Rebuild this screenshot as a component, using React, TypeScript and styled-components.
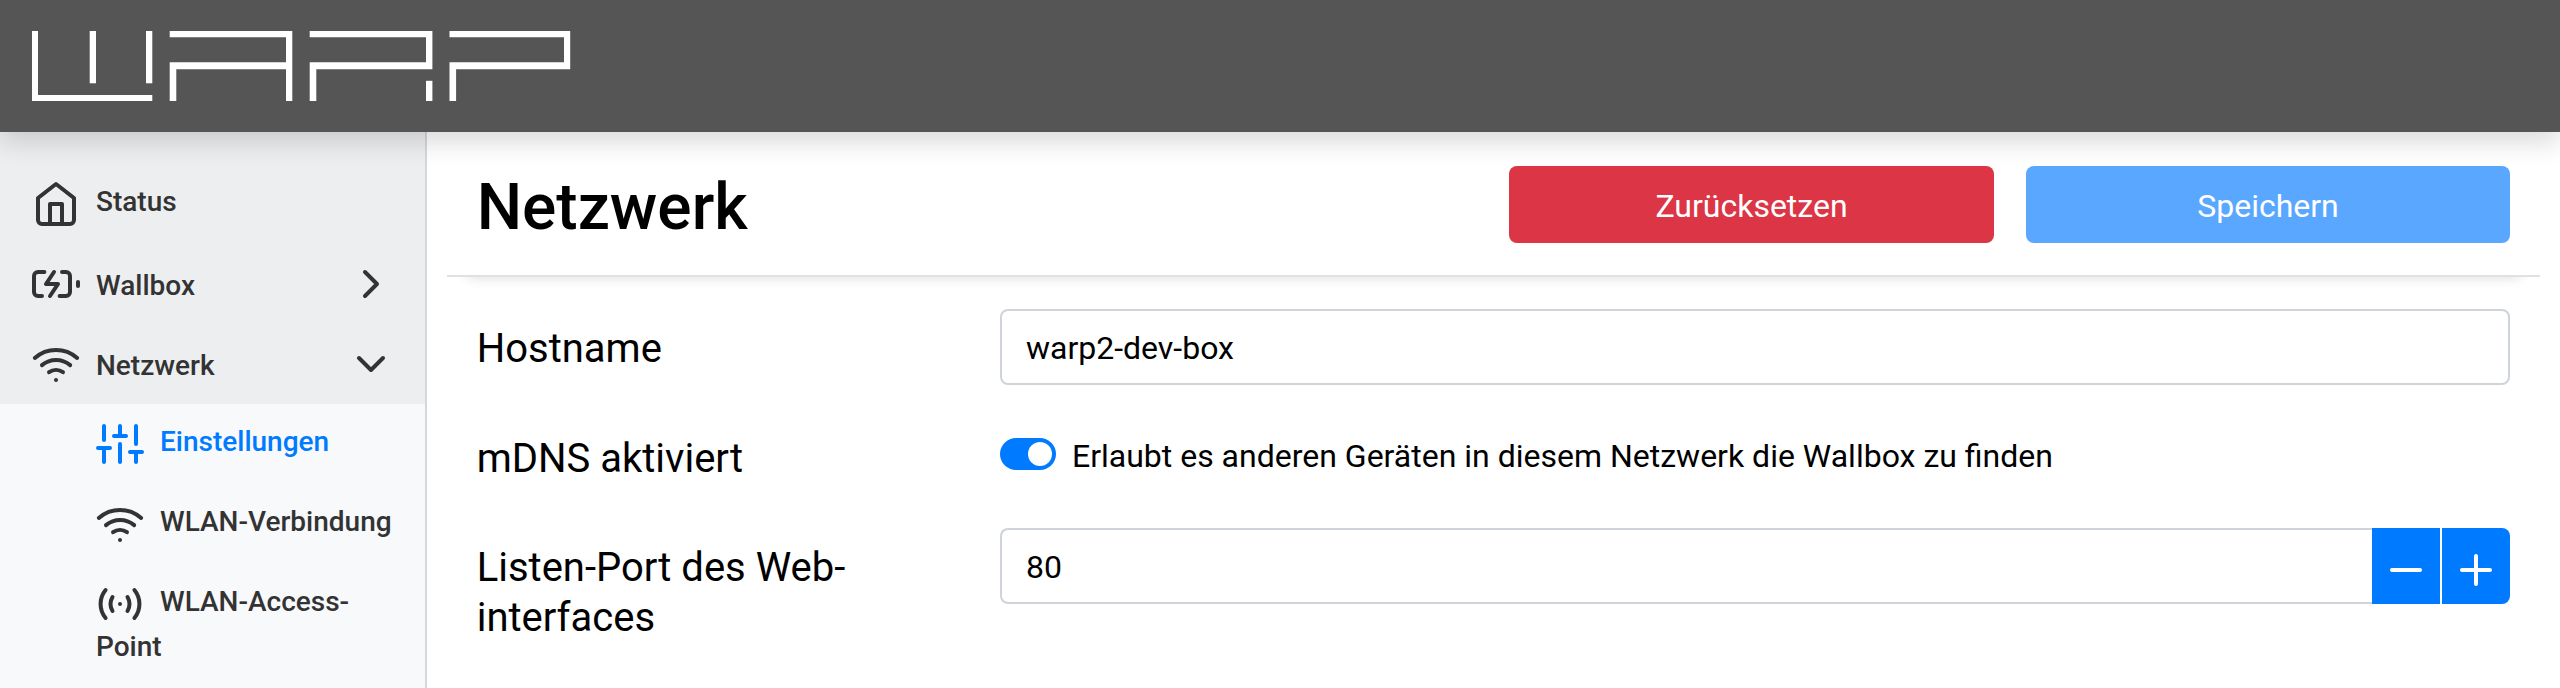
import React from "react";
import styled, { createGlobalStyle, css } from "styled-components";

const GlobalStyle = createGlobalStyle`
  *, *::before, *::after { box-sizing: border-box; }
  body {
    margin: 0;
    background: #fff;
    color: #000;
    font-family: Roboto, "Liberation Sans", sans-serif;
    font-size: 32px;
    line-height: 1.5;
    overflow: hidden;
  }
`;

const Page = styled.div`
  display: flex;
  flex-direction: column;
  height: 688px;
  overflow: hidden;
`;

const TopBar = styled.header`
  position: relative;
  z-index: 2;
  flex: none;
  display: flex;
  height: 132px;
  padding: 31px 32px;
  background: #555;
  box-shadow: 0 10px 24px rgba(0, 0, 0, 0.15);
`;

const Body = styled.div`
  flex: 1;
  min-height: 0;
  display: flex;
`;

const Sidebar = styled.nav`
  flex: none;
  width: 426.67px;
  padding-top: 32px;
  background: #edeef0;
  border-right: 2px solid #d5d7d9;
`;

const rowText = css`
  color: #333;
  font-size: 28px;
  font-weight: 500;
  text-decoration: none;
`;

const NavLink = styled.a<{ $active?: boolean }>`
  ${rowText}
  display: block;
  padding: 16px 28px 16px 32px;
  line-height: 37.5px;
  ${(p) => p.$active && "color: #007bff;"}
`;

const NavToggle = styled.a`
  ${rowText}
  display: flex;
  align-items: center;
  gap: 16px;
  height: 80px;
  padding: 0 30px 0 32px;
`;

const ToggleLabel = styled.span`
  flex: 1;
  padding-top: 4px;
`;

const SubMenu = styled.div`
  height: 400px;
  padding-left: 64px;
  background: #f8f9fb;
`;

const Svg = styled.svg<{ $inline?: boolean }>`
  flex: none;
  width: 48px;
  height: 48px;
  fill: none;
  stroke: currentColor;
  stroke-width: 2;
  stroke-linecap: round;
  stroke-linejoin: round;
  ${(p) => p.$inline && "vertical-align: middle; margin-right: 16px;"}
`;

const icons = {
  home: (
    <>
      <path d="M3 9l9-7 9 7v11a2 2 0 0 1-2 2H5a2 2 0 0 1-2-2z" />
      <polyline points="9 22 9 12 15 12 15 22" />
    </>
  ),
  battery: (
    <>
      <path d="M5 18H3a2 2 0 0 1-2-2V8a2 2 0 0 1 2-2h3.19M15 6h2a2 2 0 0 1 2 2v8a2 2 0 0 1-2 2h-3.19" />
      <line x1="23" y1="13" x2="23" y2="11" />
      <polyline points="11 6 7 12 13 12 9 18" />
    </>
  ),
  wifi: (
    <>
      <path d="M5 12.55a11 11 0 0 1 14.08 0" />
      <path d="M1.42 9a16 16 0 0 1 21.16 0" />
      <path d="M8.53 16.11a6 6 0 0 1 6.95 0" />
      <line x1="12" y1="20" x2="12.01" y2="20" />
    </>
  ),
  sliders: (
    <>
      <path d="M4 21v-7M4 10V3M12 21v-9M12 8V3M20 21v-5M20 12V3" />
      <path d="M1 14h6M9 8h6M17 16h6" />
    </>
  ),
  accessPoint: (
    <>
      <path d="M4.8 19a11 11 0 0 1 0-14" />
      <path d="M19.2 5a11 11 0 0 1 0 14" />
      <path d="M8.25 15.5a7 7 0 0 1 0-7" />
      <path d="M15.75 8.5a7 7 0 0 1 0 7" />
      <line x1="12" y1="12" x2="12.01" y2="12" />
    </>
  ),
  chevronRight: <polyline points="9 18 15 12 9 6" />,
  chevronDown: <polyline points="6 9 12 15 18 9" />,
  minus: <path d="M5 12h14" />,
  plus: <path d="M5 12h14M12 5v14" />,
};

const Icon = ({ name, inline }: { name: keyof typeof icons; inline?: boolean }) => (
  <Svg viewBox="0 0 24 24" $inline={inline} aria-hidden="true">
    {icons[name]}
  </Svg>
);

const LogoSvg = styled.svg`
  flex: none;
  width: 539px;
  height: 70px;
  fill: #fff;
`;

/* WARP wordmark built from straight bars */
const Logo = () => (
  <LogoSvg viewBox="0 0 539 70" role="img" aria-label="WARP">
    <path d="M0 0h6v64h114.3v6H0z" />
    <path d="M57.7 0h6.3v52.3h-6.3z" />
    <path d="M114 0h6.3v52.3H114z" />
    <path d="M137.7 0h122.6v70H254V38.3h-109.7V70h-6.6V31.3H254V6.3H137.7z" />
    <path d="M277.7 0h122.7v38.3H284.3V70h-6.6V31.3H394V6.3H277.7z" />
    <path d="M394 49.8h6.4V70H394z" />
    <path d="M417.5 0h120.7v38.3H424.1V70h-6.6V31.3H532V6.3H417.5z" />
  </LogoSvg>
);

const Main = styled.main`
  flex: 1;
  display: flex;
  flex-direction: column;
  padding: 0 20px;
`;

const PageHeading = styled.div`
  flex: none;
  display: flex;
  align-items: center;
  justify-content: space-between;
  height: 145px;
  padding: 0 30px;
  border-bottom: 2px solid #dee2e6;
  box-shadow: 0 20px 12px -20px rgba(0, 0, 0, 0.15);
`;

const Title = styled.h1`
  margin: 0;
  padding-top: 8px;
  font-size: 64px;
  font-weight: 500;
  line-height: 76px;
`;

const Actions = styled.div`
  display: flex;
  gap: 32px;
  padding-top: 2px;
`;

const Button = styled.button<{ $danger?: boolean }>`
  width: ${(p) => (p.$danger ? 485 : 484)}px;
  height: 77px;
  padding: 3px 0 0;
  border: 0;
  border-radius: 8px;
  background: ${(p) => (p.$danger ? "#dc3545" : "#59a7ff")};
  color: #fff;
  font: inherit;
`;

const Form = styled.form`
  display: flex;
  flex-direction: column;
  gap: 32px;
  padding: 32px 30px 0;
`;

const Row = styled.div<{ $height?: number }>`
  display: flex;
  height: ${(p) => p.$height ?? 76}px;
`;

const Label = styled.label<{ $top?: number }>`
  flex: none;
  width: 523.3px;
  padding: ${(p) => p.$top ?? 15}px 100px 0 0;
  font-size: 40px;
  line-height: 50px;
`;

const Field = styled.div`
  flex: 1;
  display: flex;
  height: 76px;
`;

const Input = styled.input<{ $grouped?: boolean }>`
  flex: 1;
  min-width: 0;
  height: 76px;
  padding: 13px 24px 11px;
  border: 2px solid #ced4da;
  border-radius: ${(p) => (p.$grouped ? "8px 0 0 8px" : "8px")};
  ${(p) => p.$grouped && "border-right: 0;"}
  background: #fff;
  color: #000;
  font: inherit;
  outline: 0;
`;

const StepButton = styled.button<{ $last?: boolean }>`
  flex: none;
  display: flex;
  align-items: center;
  justify-content: center;
  width: 68px;
  height: 76px;
  margin-left: ${(p) => (p.$last ? 2 : 0)}px;
  padding: 8px 0 0;
  border: 0;
  border-radius: ${(p) => (p.$last ? "0 8px 8px 0" : "0")};
  background: #007bff;
  color: #fff;
`;

const Switch = styled.span`
  flex: none;
  display: flex;
  justify-content: flex-end;
  width: 56px;
  height: 32px;
  margin-top: 21px;
  padding: 4px;
  border-radius: 16px;
  background: #007bff;
`;

const Knob = styled.span`
  width: 24px;
  height: 24px;
  border-radius: 12px;
  background: #fff;
`;

const SwitchText = styled.span`
  padding: 15px 0 0 16px;
`;

export default function App() {
  return (
    <>
      <GlobalStyle />
      <Page>
        <TopBar>
          <Logo />
        </TopBar>
        <Body>
          <Sidebar>
            <NavLink>
              <Icon name="home" inline />
              Status
            </NavLink>
            <NavToggle>
              <Icon name="battery" />
              <ToggleLabel>Wallbox</ToggleLabel>
              <Icon name="chevronRight" />
            </NavToggle>
            <NavToggle>
              <Icon name="wifi" />
              <ToggleLabel>Netzwerk</ToggleLabel>
              <Icon name="chevronDown" />
            </NavToggle>
            <SubMenu>
              <NavLink $active>
                <Icon name="sliders" inline />
                Einstellungen
              </NavLink>
              <NavLink>
                <Icon name="wifi" inline />
                WLAN-Verbindung
              </NavLink>
              <NavLink>
                <Icon name="accessPoint" inline />
                WLAN-Access-Point
              </NavLink>
            </SubMenu>
          </Sidebar>
          <Main>
            <PageHeading>
              <Title>Netzwerk</Title>
              <Actions>
                <Button type="button" $danger>
                  Zurücksetzen
                </Button>
                <Button type="button">Speichern</Button>
              </Actions>
            </PageHeading>
            <Form>
              <Row>
                <Label>Hostname</Label>
                <Field>
                  <Input defaultValue="warp2-dev-box" />
                </Field>
              </Row>
              <Row $height={79}>
                <Label $top={17}>mDNS aktiviert</Label>
                <Field>
                  <Switch>
                    <Knob />
                  </Switch>
                  <SwitchText>
                    Erlaubt es anderen Geräten in diesem Netzwerk die Wallbox zu finden
                  </SwitchText>
                </Field>
              </Row>
              <Row $height={120}>
                <Label>Listen-Port des Web-interfaces</Label>
                <Field>
                  <Input $grouped defaultValue="80" />
                  <StepButton type="button">
                    <Icon name="minus" />
                  </StepButton>
                  <StepButton type="button" $last>
                    <Icon name="plus" />
                  </StepButton>
                </Field>
              </Row>
            </Form>
          </Main>
        </Body>
      </Page>
    </>
  );
}
